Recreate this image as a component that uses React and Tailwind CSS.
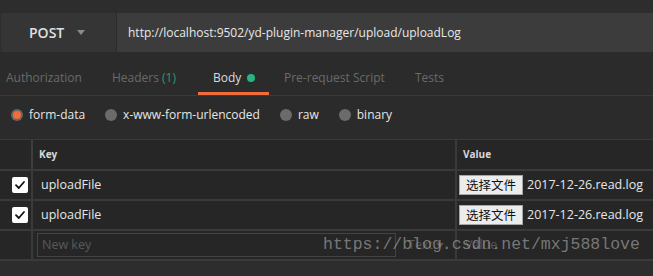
export default function App() {
  const font = { fontFamily: '"Open Sans", "Noto Sans CJK SC", sans-serif' };
  const Check = () => (
    <div className="w-[16px] h-[16px] bg-white rounded-[2px] flex items-center justify-center">
      <svg width="12" height="12" viewBox="0 0 12 12">
        <path d="M2 6.2 L4.8 9 L10 3" fill="none" stroke="#111" strokeWidth="1.8" strokeLinecap="round" strokeLinejoin="round" />
      </svg>
    </div>
  );
  const Row = ({ k }) => (
    <div className="flex h-[30px] border-b-2 border-[#3a3a3a]">
      <div className="w-[33px] border-r-2 border-[#3a3a3a] flex items-center pl-[12px]">
        <Check />
      </div>
      <div className="w-[424px] border-r-2 border-[#3a3a3a] flex items-center pl-[8px] text-[12.5px] text-[#e6e6e6]">{k}</div>
      <div className="flex-1 flex items-center pl-[2px]">
        <div className="w-[64px] h-[20px] bg-[#ececec] border border-[#a6a6a6] text-[#111] text-[12.5px] leading-none flex items-center justify-center" style={{ fontFamily: '"Noto Sans CJK SC", sans-serif' }}>选择文件</div>
        <span className="ml-[4px] text-[12.5px] text-[#e6e6e6]">2017-12-26.read.log</span>
      </div>
    </div>
  );
  return (
    <div className="w-[653px] h-[276px] bg-[#2d2d2d] relative overflow-hidden" style={font}>
      <div className="pt-[13px] pl-[1px]">
        <div className="flex h-[39px]">
          <div className="w-[116px] bg-[#353535] rounded-l-[3px] flex items-center border-r border-[#2c2c2c]">
            <span className="ml-[28px] text-[14px] font-semibold text-[#e0e0e0]">POST</span>
            <svg className="ml-[13px]" width="8" height="5" viewBox="0 0 8 5"><path d="M0 0 H8 L4 5 Z" fill="#8a8a8a" /></svg>
          </div>
          <div className="flex-1 bg-[#3c3c3c] flex items-center pl-[11px] text-[12px] text-[#e8e8e8]">http://localhost:9502/yd-plugin-manager/upload/uploadLog</div>
        </div>
      </div>
      <div className="flex h-[44px] border-b border-[#3a3a3a] text-[12px] text-[#6a6a6a] bg-[#2b2b2b]">
        <div className="w-[112px] pl-[6px] pt-[17px] leading-[18px] whitespace-nowrap">Authorization</div>
        <div className="w-[86px] pt-[17px] leading-[18px] whitespace-nowrap">Headers <span className="text-[#2a9a6e]">(1)</span></div>
        <div className="w-[71px] flex flex-col">
          <div className="pt-[17px] leading-[18px] pl-[15px] text-[#dcdcdc] flex items-center whitespace-nowrap">
            Body<span className="ml-[6px] w-[8px] h-[8px] rounded-full bg-[#26b47f] inline-block"></span>
          </div>
          <div className="mt-[5px] h-[3px] bg-[#f26b3a]"></div>
        </div>
        <div className="w-[146px] pl-[15px] pt-[17px] leading-[18px] whitespace-nowrap">Pre-request Script</div>
        <div className="pt-[17px] leading-[18px] whitespace-nowrap">Tests</div>
      </div>
      <div className="flex items-center h-[44px] pb-[5px] border-b border-[#3a3a3a] pl-[11px] gap-[20px] text-[12px] text-[#e6e6e6] bg-[#2b2b2b]">
        <div className="flex items-center gap-[6px]">
          <span className="w-[12px] h-[12px] rounded-full bg-[#666] flex items-center justify-center"><span className="w-[8px] h-[8px] rounded-full bg-[#f26b3a]"></span></span>
          form-data
        </div>
        <div className="flex items-center gap-[6px]"><span className="w-[12px] h-[12px] rounded-full bg-[#6b6b6b]"></span>x-www-form-urlencoded</div>
        <div className="flex items-center gap-[6px]"><span className="w-[12px] h-[12px] rounded-full bg-[#6b6b6b]"></span>raw</div>
        <div className="flex items-center gap-[6px]"><span className="w-[12px] h-[12px] rounded-full bg-[#6b6b6b]"></span>binary</div>
      </div>
      <div className="bg-[#262626]">
        <div className="flex h-[31px] border-b-2 border-[#3a3a3a] text-[10px] font-bold text-[#d8d8d8]">
          <div className="w-[33px] border-r-2 border-[#3e3e3e]"></div>
          <div className="w-[424px] border-r-2 border-[#3a3a3a] flex items-center pl-[6px]">Key</div>
          <div className="flex-1 flex items-center pl-[6px]">Value</div>
        </div>
        <Row k="uploadFile" />
        <Row k="uploadFile" />
        <div className="flex h-[30px] border-b-2 border-[#3a3a3a]">
          <div className="w-[33px] border-r-2 border-[#3a3a3a]"></div>
          <div className="w-[424px] border-r-2 border-[#3a3a3a] flex items-center pl-[4px] text-[12.5px]">
            <div className="w-[359px] h-[24px] border border-[#444] flex items-center pl-[4px] text-[#5a5a5a]">New key</div>
            <span className="ml-[12px] text-[#555]">Text</span>
            <svg className="ml-[3px]" width="8" height="5" viewBox="0 0 8 5"><path d="M0 0 H8 L4 5 Z" fill="#555" /></svg>
          </div>
          <div className="flex-1 flex items-center pl-[8px] text-[12.5px] text-[#555]">Value</div>
        </div>
      </div>
      <div className="absolute left-[323px] top-[235px] text-[16.5px] leading-[20px] text-[#b0b0b0]/60 whitespace-nowrap" style={{ fontFamily: '"Liberation Mono", monospace' }}>https://blog.csdn.net/mxj588love</div>
    </div>
  );
}
